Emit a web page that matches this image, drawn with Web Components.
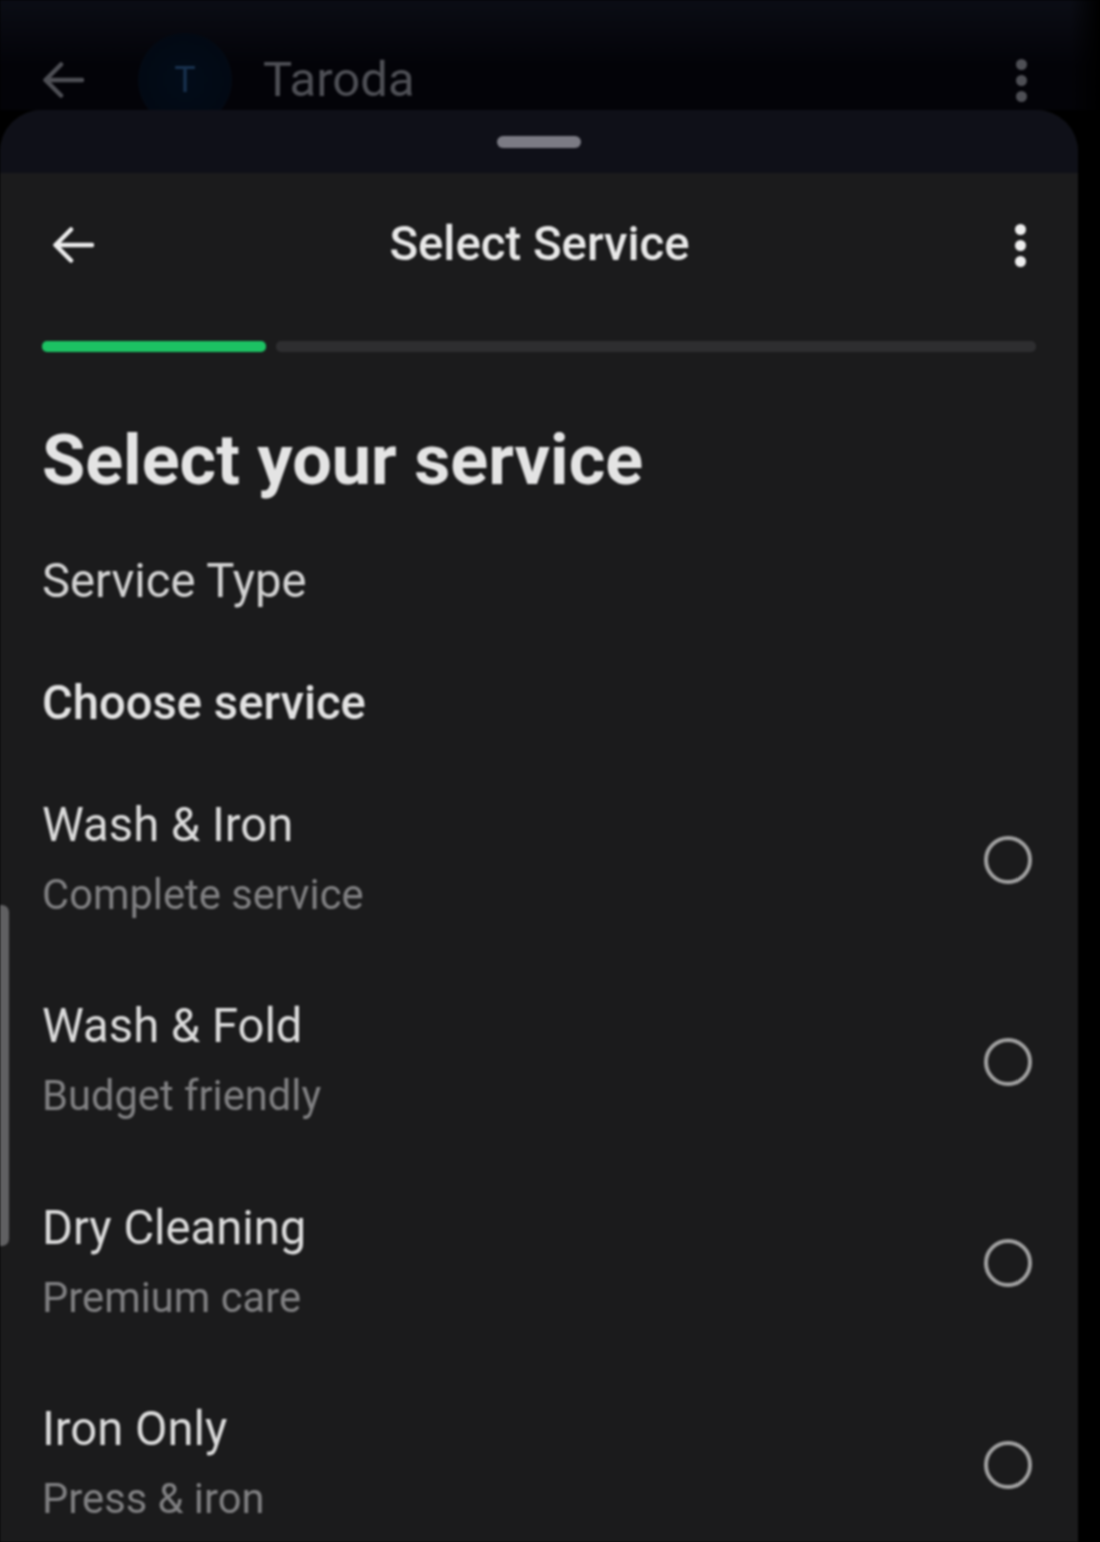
<!DOCTYPE html>
<html>
<head>
<meta charset="utf-8">
<style>
  html, body { margin: 0; background: #000; }
  body { width: 1100px; height: 1542px; overflow: hidden; font-family: Roboto, "Liberation Sans", sans-serif; }
</style>
</head>
<body>
<service-screen>
  <dim-bar slot="behind" name="Taroda"></dim-bar>
  <step-header title-text="Select Service"></step-header>
  <step-progress></step-progress>
  <service-form heading="Select your service" type-label="Service Type" choose-label="Choose service">
    <service-option label="Wash &amp; Iron" note="Complete service"></service-option>
    <service-option label="Wash &amp; Fold" note="Budget friendly"></service-option>
    <service-option label="Dry Cleaning" note="Premium care"></service-option>
    <service-option label="Iron Only" note="Press &amp; iron"></service-option>
  </service-form>
</service-screen>

<script>
const ARROW = `<path d="M42 22H6M21 6.5 5.5 22 21 37.5" fill="none" stroke="currentColor" stroke-width="4.5" stroke-linecap="round" stroke-linejoin="round"/>`;

class ServiceScreen extends HTMLElement {
  constructor() {
    super();
    this.attachShadow({ mode: 'open' }).innerHTML = `
      <style>
        :host { display: block; width: 1100px; height: 1542px; overflow: hidden; background: #000; position: relative; filter: blur(0.9px); }
        .sheet { width: 1078px; height: 1432px; background: #1b1b1c; border-radius: 42px 42px 0 0; overflow: hidden; }
        .grip { height: 63px; background: #0f1018; display: flex; justify-content: center; padding-top: 26px; box-sizing: border-box; }
        .grip i { display: block; width: 84px; height: 12px; border-radius: 6px; background: #7b7b84; }
        .scroll { position: absolute; left: 0; top: 905px; width: 9px; height: 341px; background: #606062; border-radius: 0 7px 7px 0; }
      </style>
      <slot name="behind"></slot>
      <div class="sheet">
        <div class="grip"><i></i></div>
        <slot></slot>
      </div>
      <div class="scroll"></div>
    `;
  }
}

class DimBar extends HTMLElement {
  constructor() {
    super();
    this.attachShadow({ mode: 'open' }).innerHTML = `
      <style>
        :host { display: flex; align-items: center; height: 110px; box-sizing: border-box; padding: 50px 0 0 40px; overflow: hidden;
                background: linear-gradient(90deg, transparent 1070px, #000 1100px), linear-gradient(#0b0d15, #030308 60%); color: #4e4f55; }
        svg { width: 44px; height: 44px; flex: none; }
        .avatar { width: 94px; height: 94px; border-radius: 50%; background: radial-gradient(#020c19, #030811); color: #18314e; flex: none; margin-left: 54px;
                  display: flex; align-items: center; justify-content: center; font-size: 36px; }
        .name { font-size: 49px; margin-left: 31px; flex: 1; line-height: 60px; }
        .dots { display: flex; flex-direction: column; gap: 5px; margin-right: 73px; }
        .dots b { width: 11px; height: 11px; border-radius: 50%; background: #4e4f55; }
      </style>
      <svg viewBox="0 0 44 44">${ARROW}</svg>
      <div class="avatar">T</div>
      <div class="name"></div>
      <div class="dots"><b></b><b></b><b></b></div>
    `;
    this.shadowRoot.querySelector('.name').textContent = this.getAttribute('name');
  }
}

class StepHeader extends HTMLElement {
  constructor() {
    super();
    this.attachShadow({ mode: 'open' }).innerHTML = `
      <style>
        :host { display: flex; align-items: center; height: 168px; box-sizing: border-box; padding: 0 52px 24px 50px; color: #e8e8e8; }
        svg { width: 44px; height: 44px; flex: none; color: #ececec; }
        .title { flex: 1; text-align: center; font-size: 47.3px; font-weight: 500; margin: -2px 30px 0 0; line-height: 56px; }
        .dots { display: flex; flex-direction: column; gap: 5px; }
        .dots b { width: 11px; height: 11px; border-radius: 50%; background: #eee; }
      </style>
      <svg viewBox="0 0 44 44">${ARROW}</svg>
      <div class="title"></div>
      <div class="dots"><b></b><b></b><b></b></div>
    `;
    this.shadowRoot.querySelector('.title').textContent = this.getAttribute('title-text');
  }
}

class StepProgress extends HTMLElement {
  constructor() {
    super();
    this.attachShadow({ mode: 'open' }).innerHTML = `
      <style>
        :host { display: flex; gap: 10px; padding: 0 42px; height: 11px; }
        i { display: block; height: 11px; border-radius: 5px; }
        .done { width: 224px; background: #1cc263; }
        .rest { flex: 1; background: #2e2e30; }
      </style>
      <i class="done"></i><i class="rest"></i>
    `;
  }
}

class ServiceForm extends HTMLElement {
  constructor() {
    super();
    this.attachShadow({ mode: 'open' }).innerHTML = `
      <style>
        :host { display: block; padding: 0 42px; }
        h1 { margin: 70px 0 0; font-size: 70.2px; font-weight: 700; line-height: 76px; color: #e4e4e4; }
        .type { margin-top: 55px; font-size: 47.2px; line-height: 56px; color: #d2d2d2; }
        .choose { margin-top: 66px; font-size: 47.2px; line-height: 56px; font-weight: 500; color: #e2e2e2; margin-bottom: 64px; }
      </style>
      <h1></h1>
      <div class="type"></div>
      <div class="choose"></div>
      <slot></slot>
    `;
    const s = this.shadowRoot;
    s.querySelector('h1').textContent = this.getAttribute('heading');
    s.querySelector('.type').textContent = this.getAttribute('type-label');
    s.querySelector('.choose').textContent = this.getAttribute('choose-label');
  }
}

class ServiceOption extends HTMLElement {
  constructor() {
    super();
    this.attachShadow({ mode: 'open' }).innerHTML = `
      <style>
        :host { display: flex; align-items: center; justify-content: space-between; height: 201.5px; box-sizing: border-box; padding-bottom: 75px; }
        .label { font-size: 47.2px; line-height: 56px; color: #dadada; }
        .note { font-size: 41.7px; line-height: 50px; margin-top: 17px; color: #808082; }
        .radio { width: 48px; height: 48px; box-sizing: border-box; border: 4.5px solid #a0a0a0; border-radius: 50%; margin: 4px 4px 0 0; }
      </style>
      <div>
        <div class="label"></div>
        <div class="note"></div>
      </div>
      <div class="radio"></div>
    `;
    this.shadowRoot.querySelector('.label').textContent = this.getAttribute('label');
    this.shadowRoot.querySelector('.note').textContent = this.getAttribute('note');
  }
}

customElements.define('service-screen', ServiceScreen);
customElements.define('dim-bar', DimBar);
customElements.define('step-header', StepHeader);
customElements.define('step-progress', StepProgress);
customElements.define('service-form', ServiceForm);
customElements.define('service-option', ServiceOption);
</script>
</body>
</html>
